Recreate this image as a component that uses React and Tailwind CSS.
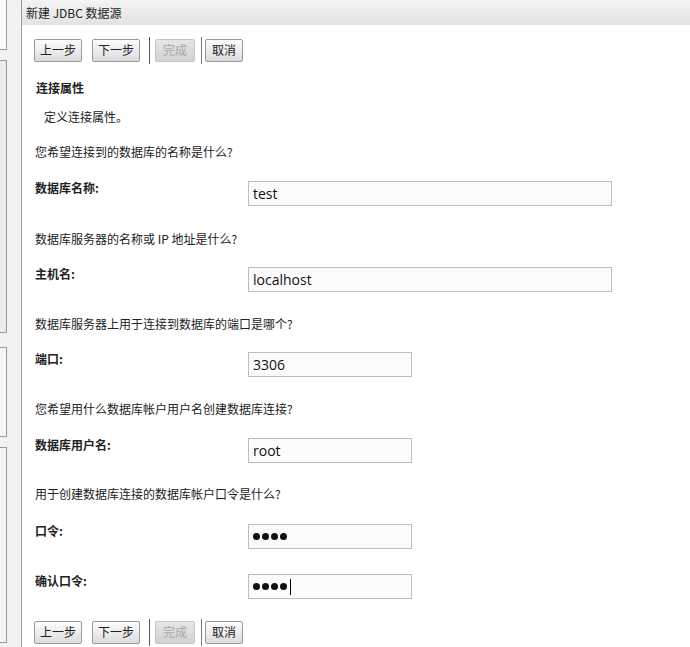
import React from 'react';

const font = { fontFamily: '"Noto Sans CJK SC", "Noto Sans", sans-serif' };

function Btn({ children, disabled, px }) {
  return (
    <button
      className={`h-[23px] ${px} text-[12px] leading-none border rounded-[2px] ${
        disabled
          ? 'border-[#c4c4c4] bg-gradient-to-b from-[#e6e6e6] to-[#d2d2d2] text-[#a8a8a8]'
          : 'border-[#9a9a9a] bg-gradient-to-b from-[#fdfdfd] to-[#dcdcdc] text-[#222]'
      }`}
    >
      {children}
    </button>
  );
}

function ButtonBar() {
  return (
    <div className="flex items-center h-[28px]">
      <Btn px="px-[5px]">上一步</Btn>
      <div className="w-[10px]" />
      <Btn px="px-[5px]">下一步</Btn>
      <div className="w-[1px] h-[27px] bg-[#555] ml-[9px] mr-[5px]" />
      <Btn disabled px="px-[7px]">完成</Btn>
      <div className="w-[1px] h-[27px] bg-[#777] ml-[6px] mr-[3px]" />
      <Btn px="px-[6px]">取消</Btn>
    </div>
  );
}

function Field({ label, value, wide, password, caret }) {
  return (
    <div className="flex items-start h-[25px]">
      <div className="w-[213px] mt-[-1px] text-[12px] leading-[16px] font-bold text-[#222]">{label}</div>
      <div
        className={`${wide ? 'w-[364px]' : 'w-[164px]'} h-[25px] border border-[#bdbdbd] bg-[#fbfbfb] flex items-center px-[4px] text-[14px] text-[#111]`}
        style={{ fontFamily: '"Open Sans", "Noto Sans", sans-serif' }}
      >
        {password ? (
          <span className="flex items-center gap-[2px]">
            {[0, 1, 2, 3].map(i => (
              <span key={i} className="w-[7px] h-[7px] rounded-full bg-[#111]" />
            ))}
            {caret && <span className="ml-[1px] w-[1px] h-[16px] bg-black" />}
          </span>
        ) : (
          value
        )}
      </div>
    </div>
  );
}

function Question({ children }) {
  return <div className="text-[12px] text-[#222] h-[16px] leading-[16px]">{children}</div>;
}

export default function App() {
  return (
    <div className="w-[690px] h-[647px] flex bg-white overflow-hidden" style={font}>
      <div className="w-[22px] bg-[#f2f2f2] border-r border-[#9a9a9a] flex flex-col">
        <div className="w-[7px] h-[50px] bg-[#fafafa] border-r border-b border-[#9a9a9a]" />
        <div className="w-[7px] h-[273px] mt-[10px] bg-[#ececec] border-r border-t border-b border-[#9a9a9a]" />
        <div className="w-[7px] h-[90px] mt-[14px] bg-[#f6f6f6] border-r border-t border-b border-[#9a9a9a]" />
        <div className="w-[7px] h-[196px] mt-[10px] bg-[#f4f4f4] border-r border-t border-b border-[#9a9a9a]" />
      </div>
      <div className="flex-1 flex flex-col">
        <div className="h-[25px] bg-gradient-to-b from-[#f4f4f4] to-[#e2e2e2] flex items-center pl-[4px] text-[12px] text-[#222]">
          新建 JDBC 数据源
        </div>
        <div className="pl-[12px] pt-[11px]">
          <ButtonBar />
          <div className="mt-[16px] pl-[2px] text-[12px] font-bold text-[#222] h-[16px] leading-[16px]">连接属性</div>
          <div className="mt-[13px] pl-[10px] text-[12px] text-[#222] h-[16px] leading-[16px]">定义连接属性。</div>
          <div className="mt-[19px] pl-[1px]">
            <Question>您希望连接到的数据库的名称是什么?</Question>
            <div className="mt-[21px]"><Field label="数据库名称:" value="test" wide /></div>
            <div className="mt-[25px]"><Question>数据库服务器的名称或 IP 地址是什么?</Question></div>
            <div className="mt-[20px]"><Field label="主机名:" value="localhost" wide /></div>
            <div className="mt-[24px]"><Question>数据库服务器上用于连接到数据库的端口是哪个?</Question></div>
            <div className="mt-[20px]"><Field label="端口:" value="3306" /></div>
            <div className="mt-[24px]"><Question>您希望用什么数据库帐户用户名创建数据库连接?</Question></div>
            <div className="mt-[21px]"><Field label="数据库用户名:" value="root" /></div>
            <div className="mt-[23px]"><Question>用于创建数据库连接的数据库帐户口令是什么?</Question></div>
            <div className="mt-[22px]"><Field label="口令:" password /></div>
            <div className="mt-[25px]"><Field label="确认口令:" password caret /></div>
          </div>
          <div className="mt-[19px]">
            <ButtonBar />
          </div>
        </div>
      </div>
    </div>
  );
}
